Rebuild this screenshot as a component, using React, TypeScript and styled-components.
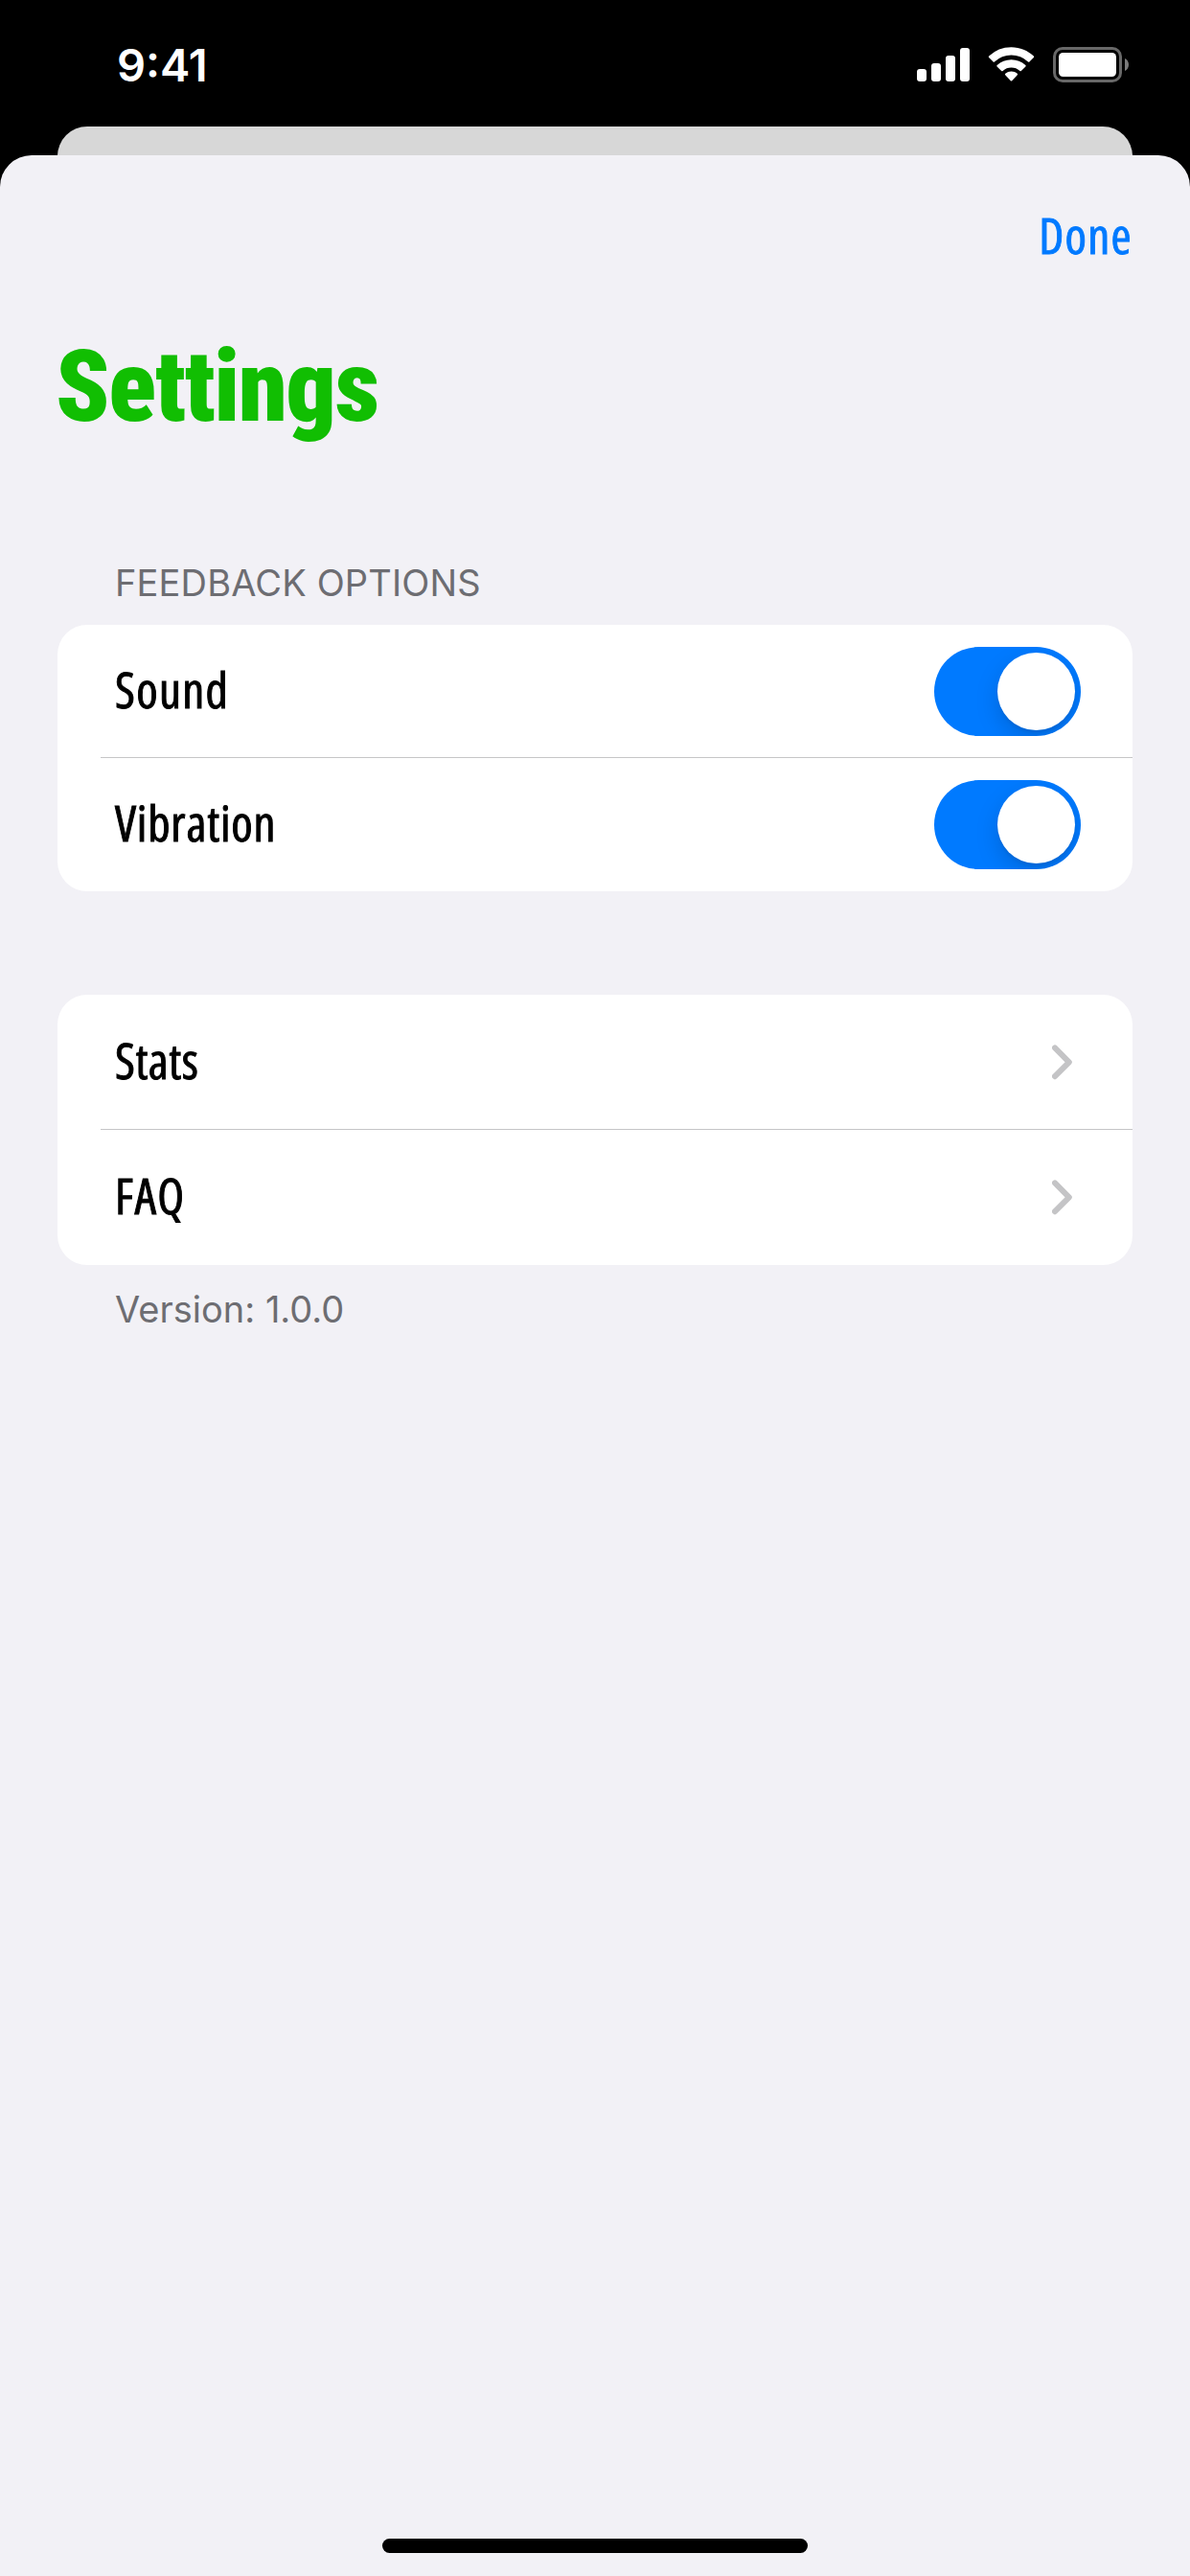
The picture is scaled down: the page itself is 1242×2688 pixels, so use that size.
import React, { useState } from "react";
import styled, { createGlobalStyle } from "styled-components";

const GlobalStyle = createGlobalStyle`
  *, *::before, *::after { box-sizing: border-box; }
  body { margin: 0; background: #000; }
  button { border: 0; padding: 0; background: none; font: inherit; color: inherit; }
  svg { display: block; }
`;

const systemFont = `Inter, "Liberation Sans", sans-serif`;
const condensedFont = `"Open Sans", "Noto Sans", sans-serif`;
const displayFont = `Roboto, "Open Sans", sans-serif`;

const Screen = styled.div`
  width: 1242px;
  height: 2688px;
  display: flex;
  flex-direction: column;
  background: #000;
  overflow: hidden;
  font-family: ${systemFont};
`;

const StatusBar = styled.header`
  height: 132px;
  flex: none;
  display: flex;
  justify-content: space-between;
  align-items: flex-start;
  padding: 48px 63px 0 122px;
`;

const Clock = styled.time`
  color: #fff;
  font-size: 47px;
  font-weight: 600;
  line-height: 40px;
`;

const BackCard = styled.div`
  height: 30px;
  flex: none;
  margin: 0 60px;
  overflow: hidden;

  &::before {
    content: "";
    display: block;
    height: 90px;
    border-radius: 31px;
    background: #d7d7d7;
  }
`;

const Sheet = styled.main`
  flex: 1;
  display: flex;
  flex-direction: column;
  border-radius: 33px 33px 0 0;
  background: #f2f1f6;
`;

const NavBar = styled.nav`
  display: flex;
  justify-content: flex-end;
  padding: 53px 60px 0;
`;

const condensedText = `
  font-family: ${condensedFont};
  font-stretch: 75%;
  font-weight: 500;
  font-size: 51px;
  line-height: 60px;
  white-space: nowrap;
  -webkit-text-stroke: 0.9px currentColor;
`;

const DoneButton = styled.button`
  && {
    ${condensedText}
    letter-spacing: 1.3px;
    color: #007aff;
  }
`;

const Title = styled.h1`
  margin: 69px 0 0 58px;
  font-family: ${displayFont};
  font-stretch: 75%;
  font-weight: 900;
  font-size: 103px;
  line-height: 120px;
  letter-spacing: -1.4px;
  color: #11be02;
`;

const Sections = styled.div`
  display: flex;
  flex-direction: column;
  gap: 108px;
  margin-top: 121px;
  padding: 0 60px;
`;

const Section = styled.section`
  display: flex;
  flex-direction: column;
`;

const Caption = styled.p<{ $footer?: boolean }>`
  margin: ${(p) => (p.$footer ? "23px 0 0 60px" : "0 0 21px 60px")};
  font-size: 38px;
  line-height: 46px;
  letter-spacing: ${(p) => (p.$footer ? 0 : 0.15)}px;
  color: #6d6d72;
`;

const Group = styled.div`
  border-radius: 31px;
  background: #fff;
  overflow: hidden;
`;

const Row = styled.div<{ $height: number; $inset: number }>`
  height: ${(p) => p.$height}px;
  display: flex;
  align-items: center;
  justify-content: space-between;
  padding: 0 ${(p) => p.$inset}px 0 60px;

  &:not(:last-child) {
    background: linear-gradient(#c5c5c7, #c5c5c7) 45px 100% / 1077px 1px no-repeat;
  }
`;

const Label = styled.span<{ $tracking: number }>`
  ${condensedText}
  letter-spacing: ${(p) => p.$tracking}px;
  padding-bottom: 6px;
  color: #000;
`;

const Track = styled.button<{ $on: boolean }>`
  && {
    width: 153px;
    height: 93px;
    display: flex;
    justify-content: ${(p) => (p.$on ? "flex-end" : "flex-start")};
    padding: 6px;
    border-radius: 47px;
    background: ${(p) => (p.$on ? "#007aff" : "#e9e9ea")};
    overflow: hidden;
  }
`;

const Thumb = styled.span`
  width: 81px;
  height: 81px;
  border-radius: 50%;
  background: #fff;
  box-shadow: 0 9px 24px rgba(0, 0, 0, 0.15), 0 3px 3px rgba(0, 0, 0, 0.06);
`;

const HomeIndicator = styled.div`
  width: 444px;
  height: 15px;
  margin: auto auto 24px;
  border-radius: 8px;
  background: #000;
`;

function StatusIcons() {
  return (
    <svg width="222" height="40" viewBox="957 48 222 40" fill="#fff">
      <rect x="957" y="72" width="10" height="13" rx="3" />
      <rect x="972" y="66" width="10" height="19" rx="3" />
      <rect x="987" y="58" width="10" height="27" rx="3" />
      <rect x="1002" y="50" width="10" height="35" rx="3" />
      <path d="M1055.5 49.3c9 0 17.3 3.5 23.4 9.3.4.4.4 1 0 1.400l-4.500 4.500c-.4.4-1 .4-1.400 0a25.300 25.300 0 0 0-35 0c-.4.4-1 .4-1.400 0l-4.500-4.500c-.4-.4-.4-1 0-1.400a34 34 0 0 1 23.400-9.300z" />
      <path d="M1055.500 62.200c5.600 0 10.800 2.100 14.800 5.700.5.4.5 1 .1 1.500l-4.600 4.500c-.4.4-1 .4-1.400.1a13.400 13.400 0 0 0-17.800 0c-.4.3-1 .3-1.400-.1l-4.600-4.500c-.4-.5-.4-1.100.1-1.500 4-3.600 9.200-5.700 14.800-5.700z" />
      <path d="M1055.500 74.500c2.400 0 4.500.9 6.200 2.300.5.4.5 1 .1 1.400l-5.600 6.100c-.4.4-1 .4-1.400 0l-5.600-6.100c-.4-.4-.4-1 .1-1.400a9.600 9.600 0 0 1 6.200-2.300z" />
      <rect x="1100.500" y="50.500" width="69" height="34" rx="8.500" fill="none" stroke="#686868" strokeWidth="3" />
      <rect x="1105" y="55" width="60" height="25" rx="4.500" />
      <path d="M1174 61c2.500 1.200 4 3.600 4 6.500s-1.500 5.300-4 6.500z" fill="#7a7a7a" />
    </svg>
  );
}

function Chevron() {
  return (
    <svg width="21" height="37" viewBox="0 0 21 37" fill="none" stroke="#c4c4c6" strokeWidth="6" strokeLinecap="round" strokeLinejoin="round">
      <path d="M3 3.400L17.800 18.300L3 33.200" />
    </svg>
  );
}

function ToggleRow({ label, tracking }: { label: string; tracking: number }) {
  const [on, setOn] = useState(true);
  return (
    <Row $height={139} $inset={54}>
      <Label $tracking={tracking}>{label}</Label>
      <Track $on={on} role="switch" aria-checked={on} aria-label={label} onClick={() => setOn(!on)}>
        <Thumb />
      </Track>
    </Row>
  );
}

function LinkRow({ label, tracking }: { label: string; tracking: number }) {
  return (
    <Row $height={141} $inset={63}>
      <Label $tracking={tracking}>{label}</Label>
      <Chevron />
    </Row>
  );
}

export default function App() {
  return (
    <>
      <GlobalStyle />
      <Screen>
        <StatusBar>
          <Clock>9:41</Clock>
          <StatusIcons />
        </StatusBar>
        <BackCard />
        <Sheet>
          <NavBar>
            <DoneButton>Done</DoneButton>
          </NavBar>
          <Title>Settings</Title>
          <Sections>
            <Section>
              <Caption>FEEDBACK OPTIONS</Caption>
              <Group>
                <ToggleRow label="Sound" tracking={1.3} />
                <ToggleRow label="Vibration" tracking={0.8} />
              </Group>
            </Section>
            <Section>
              <Group>
                <LinkRow label="Stats" tracking={0.5} />
                <LinkRow label="FAQ" tracking={1.2} />
              </Group>
              <Caption $footer>Version: 1.0.0</Caption>
            </Section>
          </Sections>
          <HomeIndicator />
        </Sheet>
      </Screen>
    </>
  );
}
